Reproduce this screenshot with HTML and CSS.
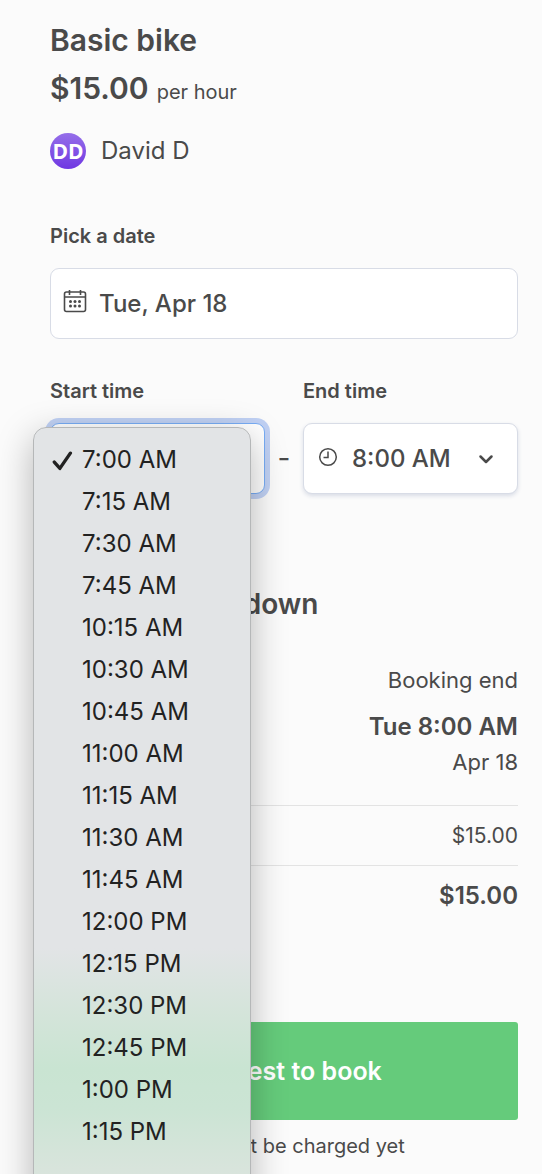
FILE: index.html
```html
<!DOCTYPE html>
<html lang="en">
<head>
<meta charset="utf-8">
<meta name="viewport" content="width=device-width, initial-scale=1">
<title>Basic bike</title>
<link rel="stylesheet" href="styles.css">
</head>
<body>
<main class="page">
  <header>
    <h1 class="title">Basic bike</h1>
    <p class="price"><strong class="price-value">$15.00</strong> <span class="price-unit">per hour</span></p>
    <div class="author"><span class="avatar">DD</span><span class="author-name">David D</span></div>
  </header>

  <form class="booking">
    <div class="field date-field">
      <label class="label" for="date">Pick a date</label>
      <div class="control">
        <svg class="icon icon-calendar" viewBox="0 0 24 24" fill="none" stroke="currentColor" stroke-width="1.6" aria-hidden="true">
          <rect x="1.5" y="3" width="21" height="19.5" rx="2"/>
          <path d="M1.5 8h21M6.5 1v5M17.500 1v5"/>
          <g fill="currentColor" stroke="none">
            <circle cx="7.500" cy="12.500" r="1.500"/><circle cx="12" cy="12.500" r="1.500"/><circle cx="16.500" cy="12.500" r="1.500"/>
            <circle cx="7.500" cy="17" r="1.500"/><circle cx="12" cy="17" r="1.500"/><circle cx="16.500" cy="17" r="1.500"/>
          </g>
        </svg>
        <input class="input" id="date" type="text" value="Tue, Apr 18">
      </div>
    </div>

    <div class="times">
      <div class="field">
        <label class="label" for="start">Start time</label>
        <div class="control">
          <select class="input select select-open" id="start"><option>7:00 AM</option></select>
          <ul class="menu" role="listbox" aria-label="Start time">
            <li class="option" role="option" aria-selected="true">
              <svg class="check" viewBox="0 0 20 20" fill="none" stroke="currentColor" stroke-width="3.2" stroke-linecap="round" stroke-linejoin="round" aria-hidden="true"><path d="M2.200 11.500 7.500 17.500 17.500 3"/></svg>7:00 AM</li>
            <li class="option" role="option">7:15 AM</li>
            <li class="option" role="option">7:30 AM</li>
            <li class="option" role="option">7:45 AM</li>
            <li class="option" role="option">10:15 AM</li>
            <li class="option" role="option">10:30 AM</li>
            <li class="option" role="option">10:45 AM</li>
            <li class="option" role="option">11:00 AM</li>
            <li class="option" role="option">11:15 AM</li>
            <li class="option" role="option">11:30 AM</li>
            <li class="option" role="option">11:45 AM</li>
            <li class="option" role="option">12:00 PM</li>
            <li class="option" role="option">12:15 PM</li>
            <li class="option" role="option">12:30 PM</li>
            <li class="option" role="option">12:45 PM</li>
            <li class="option" role="option">1:00 PM</li>
            <li class="option" role="option">1:15 PM</li>
          </ul>
        </div>
      </div>
      <span class="dash">-</span>
      <div class="field">
        <label class="label" for="end">End time</label>
        <div class="control">
          <svg class="icon icon-clock" viewBox="0 0 20 20" fill="none" stroke="currentColor" stroke-width="1.500" aria-hidden="true"><circle cx="10" cy="10" r="8.300"/><path d="M10 4.500V10.500H5.500"/></svg>
          <select class="input select" id="end"><option>8:00 AM</option></select>
          <svg class="icon icon-chevron" viewBox="0 0 16 16" fill="none" stroke="currentColor" stroke-width="2.500" stroke-linecap="round" stroke-linejoin="round" aria-hidden="true"><path d="M2.500 5.500 8 11l5.500-5.500"/></svg>
        </div>
      </div>
    </div>

    <h2 class="heading">Booking breakdown</h2>
    <div class="period">
      <p class="period-label">Booking end</p>
      <p class="period-time">Tue 8:00 AM</p>
      <p class="period-date">Apr 18</p>
    </div>
    <div class="line">$15.00</div>
    <div class="line line-total">$15.00</div>

    <button class="submit" type="button">Request to book</button>
    <p class="note">You won't be charged yet</p>
  </form>
</main>
</body>
</html>
```
FILE: styles.css
```css
* {
  box-sizing: border-box;
}

body,
h1,
h2,
p,
ul {
  margin: 0;
}

body {
  background: #fbfbfb;
  color: #4a4a4a;
  font-family: Inter, "Liberation Sans", sans-serif;
  font-size: 20px;
  line-height: 30px;
}

.page {
  min-height: 100vh;
  padding: 20px 24px 13px 50px;
  overflow: hidden;
}

.title {
  font-size: 30px;
  font-weight: 600;
  line-height: 40px;
}

.price {
  display: flex;
  align-items: baseline;
  gap: 8px;
  line-height: 56px;
}

.price-value {
  font-size: 30px;
  font-weight: 600;
}

.author {
  display: flex;
  align-items: center;
  gap: 15px;
  margin-top: 13px;
}

.avatar {
  width: 36px;
  border-radius: 50%;
  background: linear-gradient(#956fe9, #6f37e2);
  color: #fff;
  font-family: "Open Sans", sans-serif;
  font-size: 21px;
  font-weight: 700;
  line-height: 36px;
  text-align: center;
}

.author-name {
  font-size: 24px;
}

.date-field {
  margin-top: 52px;
}

.label {
  display: block;
  margin-bottom: 17px;
  font-size: 20px;
  font-weight: 600;
}

.control {
  position: relative;
}

.input {
  display: block;
  width: 100%;
  height: 71px;
  padding: 0 48px;
  border: 1px solid #d8dce6;
  border-radius: 9px;
  background: #fff;
  color: inherit;
  font-family: inherit;
  font-size: 24px;
  font-weight: 500;
}

.select {
  appearance: none;
  box-shadow: 0 2px 4px #d8dce6;
}

.select-open {
  border-color: #78adf5;
  box-shadow: 0 0 0 5px #c0d1f4;
}

.icon {
  position: absolute;
  pointer-events: none;
}

.icon-calendar {
  top: 21px;
  left: 13px;
  width: 24px;
}

.icon-clock {
  top: 24px;
  left: 15px;
  width: 20px;
}

.icon-chevron {
  top: 28px;
  right: 24px;
  width: 16px;
}

.times {
  display: grid;
  grid-template-columns: 1fr 38px 1fr;
  align-items: end;
  margin-top: 37px;
}

.dash {
  font-size: 28px;
  line-height: 71px;
  text-align: center;
}

.menu {
  position: absolute;
  top: 4px;
  left: -17px;
  z-index: 1;
  width: 218px;
  padding: 11px 0 60px;
  border: 1px solid #b5b7b8;
  border-radius: 13px;
  background: linear-gradient(#e2e4e6 520px, #d3e4d9 590px, #c9e4d2 640px, #cbe4d4 680px, #dae4dd 750px);
  box-shadow: 0 10px 36px #00000048;
  color: #222;
  font-size: 24px;
  line-height: 42px;
  list-style: none;
}

.option {
  position: relative;
  padding-left: 48px;
}

.check {
  position: absolute;
  top: 11px;
  left: 18px;
  width: 21px;
}

.heading {
  margin-top: 90px;
  font-size: 28px;
  font-weight: 600;
  line-height: 40px;
}

.period {
  margin-top: 41px;
  padding-bottom: 28px;
  font-size: 22px;
  text-align: right;
}

.period-time {
  margin-top: 12px;
  font-size: 24px;
  font-weight: 600;
  line-height: 40px;
}

.line {
  border-top: 1px solid #e3e3e3;
  font-size: 21px;
  line-height: 59px;
  text-align: right;
}

.line-total {
  font-size: 24px;
  font-weight: 600;
}

.submit {
  display: block;
  width: 100%;
  height: 98px;
  margin-top: 97px;
  border: 0;
  border-radius: 3px;
  background: #65cb7b;
  color: #fff;
  font-family: inherit;
  font-size: 25px;
  font-weight: 600;
}

.note {
  margin-top: 11px;
  text-align: center;
}
```
